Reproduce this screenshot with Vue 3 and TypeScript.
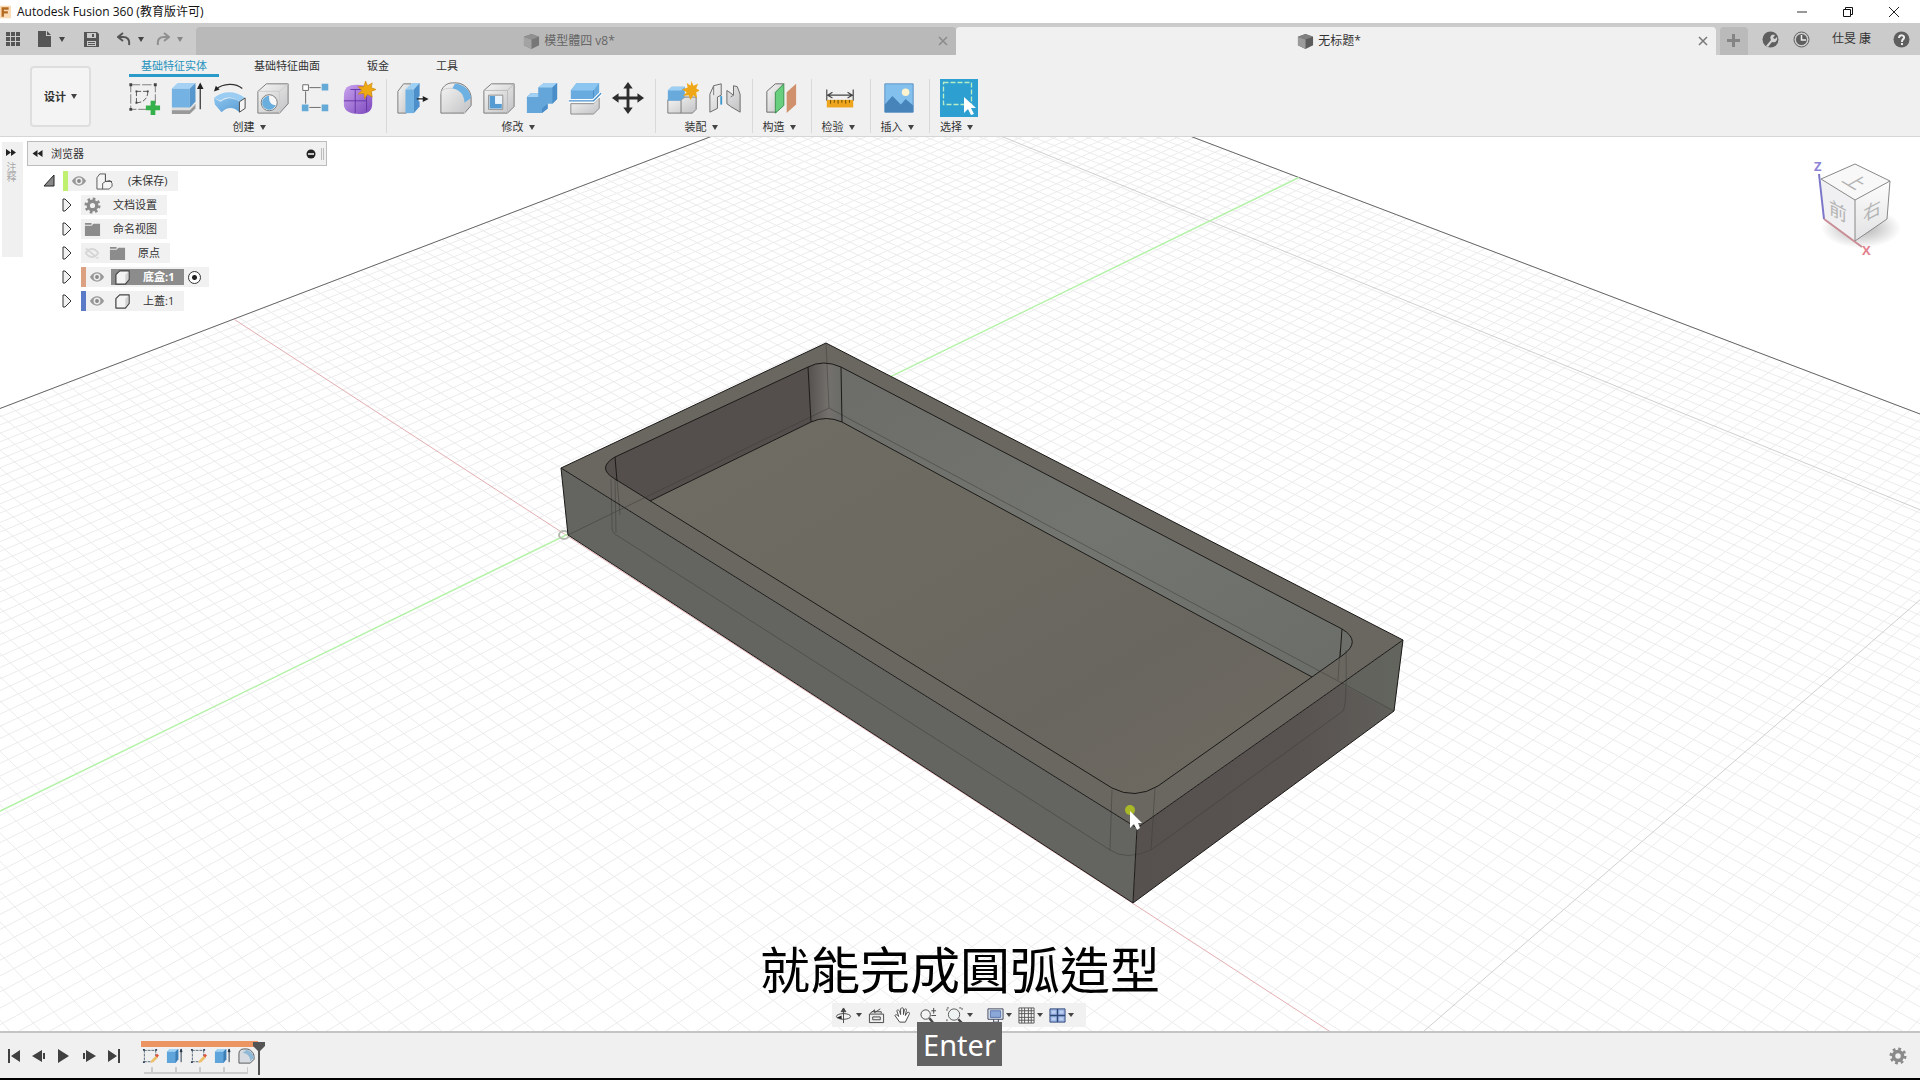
<script setup lang="ts">
interface Point { x: number; y: number }
interface Group { label: string; icons: string[] }
interface Node {
  label: string
  icon: string
  eye?: 'eye' | 'eye-off'
  bar?: string
  depth: number
  active?: boolean
}

const ribbonTabs: string[] = ['基础特征实体', '基础特征曲面', '钣金', '工具']
const groups: Group[] = [
  { label: '创建', icons: ['sketch', 'extrude', 'revolve', 'hole', 'pattern', 'form'] },
  { label: '修改', icons: ['presspull', 'fillet', 'shell', 'combine', 'split', 'move'] },
  { label: '装配', icons: ['component', 'joint'] },
  { label: '构造', icons: ['plane'] },
  { label: '检验', icons: ['measure'] },
  { label: '插入', icons: ['insert'] },
  { label: '选择', icons: ['select'] },
]
const nodes: Node[] = [
  { label: '(未保存)', icon: 'assembly', eye: 'eye', bar: '#c0f070', depth: 0 },
  { label: '文档设置', icon: 'gear', depth: 1 },
  { label: '命名视图', icon: 'folder', depth: 1 },
  { label: '原点', icon: 'folder', eye: 'eye-off', depth: 1 },
  { label: '底盒:1', icon: 'body', eye: 'eye', bar: '#dba180', depth: 1, active: true },
  { label: '上蓋:1', icon: 'body', eye: 'eye', bar: '#5b7bc8', depth: 1 },
]
const navTools = [
  { icon: 'orbit', caret: true, name: '动态观察' },
  { icon: 'lookat', caret: false, name: '观察方向' },
  { icon: 'pan', caret: false, name: '平移' },
  { icon: 'zoom', caret: false, name: '缩放' },
  { icon: 'fit', caret: true, name: '适合' },
  { icon: 'display', caret: true, name: '显示设置' },
  { icon: 'grid', caret: true, name: '栅格' },
  { icon: 'viewports', caret: true, name: '视口' },
]
const playback = ['first', 'previous', 'play', 'next', 'last']
const features = ['tl-sketch', 'tl-extrude', 'tl-sketch', 'tl-extrude', 'tl-fillet']

// Ground plane in perspective: an origin and the vanishing points of its two axes.
const origin: Point = { x: 566, y: 535 }
const vanishU: Point = { x: 3821, y: -1053 }
const vanishV: Point = { x: -1799, y: -1002 }
const scaleU = 1 / 4020
const scaleV = 1 / 3928
function project(u: number, v: number): Point {
  const a = u * scaleU
  const b = v * scaleV
  const w = 1 + a + b
  return {
    x: (origin.x + a * vanishU.x + b * vanishV.x) / w,
    y: (origin.y + a * vanishU.y + b * vanishV.y) / w,
  }
}
function segment(u1: number, v1: number, u2: number, v2: number): string {
  const p = project(u1, v1)
  const q = project(u2, v2)
  return `M${p.x.toFixed(1)} ${p.y.toFixed(1)}L${q.x.toFixed(1)} ${q.y.toFixed(1)}`
}
const step = 16.6
const maxU = 1168
const maxV = 642
const minU = -1700
const minV = -1700
let minor = ''
for (let u = maxU; u > minU; u -= step) minor += segment(u, maxV, u, minV)
for (let v = maxV; v > minV; v -= step) minor += segment(maxU, v, minU, v)
const major = segment(991, maxV, 991, minV) + segment(maxU, -1009, minU, -1009)
const border = segment(maxU, maxV, maxU, minV) + segment(maxU, maxV, minU, maxV)
const redAxis = segment(0, maxV, 0, minV)
const greenAxis = segment(minU, 0, maxU, 0)
</script>

<template>
  <svg class="defs" aria-hidden="true">
    <defs>
      <linearGradient id="blue" x2="1" y2="1"><stop stop-color="#8cc4ee" /><stop offset="1" stop-color="#5d9fd6" /></linearGradient>
      <linearGradient id="grey" x2="1" y2="1"><stop stop-color="#f6f6f6" /><stop offset="1" stop-color="#c2c2c4" /></linearGradient>
      <linearGradient id="purple" x2="1" y2="1"><stop stop-color="#c9a3ee" /><stop offset="1" stop-color="#7c47bd" /></linearGradient>
      <symbol id="sketch" viewBox="0 0 36 36"><path d="M4 4h26v26H4z" fill="none" stroke="#777" stroke-dasharray="10 2" /><path d="M10 11h12M10 11v12M22 11c0 8-5 12-12 12" fill="none" stroke="#555" stroke-dasharray="5 2" /><path d="M2.500 2.500h3v3h-3zM28.500 2.500h3v3h-3zM2.500 28.500h3v3h-3zM9 10h2v2H9zM21 10h2v2h-2zM9 22h2v2H9z" fill="#444" /><path d="M25 21h5v5h5v5h-5v5h-5v-5h-5v-5h5z" fill="#35b04b" /></symbol>
      <symbol id="extrude" viewBox="0 0 36 36"><path d="M2 30h19l6-6v5l-6 6H2z" fill="#999" /><path d="M2 29l4-4h21l-6 6H2z" fill="#ddd" /><path d="M2 8l6-6h19l-6 6z" fill="#a5d2f4" /><path d="M2 8h19v20H2z" fill="#73b2e3" /><path d="M21 8l6-6v20l-6 6z" fill="#5797ce" /><path d="M32 30V6M29.500 8L32 3l2.500 5z" fill="#222" stroke="#222" stroke-width="1.200" /></symbol>
      <symbol id="revolve" viewBox="0 0 36 36"><path d="M3 9C11 2 24 2 31 8" fill="none" stroke="#333" stroke-width="1.300" /><path d="M1 11l2-6 4 4z" fill="#222" /><path d="M1 18c9-8 23-8 33 0l-6 4c-8-6-14-6-20-1z" fill="#9bcdf2" /><path d="M1 18l7 4c6-5 13-5 20 0v11c-6-6-13-6-19 0l-7-8z" fill="url(#blue)" /><path d="M28 22l6-4v11l-6 4z" fill="#f4f4f4" stroke="#444" /></symbol>
      <symbol id="hole" viewBox="0 0 36 36"><path d="M2 11l9-8h23v21l-9 10H2z" fill="url(#grey)" stroke="#777" /><path d="M2 11h23v23M25 11l9-8" fill="none" stroke="#ccc" /><circle cx="14" cy="23" r="8.500" fill="#f7f7f7" stroke="#777" /><path d="M14 15.500a7.500 7.500 0 1 0 7 10c-5 0-8-4-7-10z" fill="#6aaede" /></symbol>
      <symbol id="pattern" viewBox="0 0 36 36"><path d="M11 7h12M7 11v13M11 28h12" stroke="#666" /><path d="M4 4h6v6H4z" fill="#fff" stroke="#666" /><path d="M24 3h7v7h-7zM3 25h7v7H3zM24 25h7v7h-7z" fill="#65a9d6" /></symbol>
      <symbol id="form" viewBox="0 0 36 36"><path d="M2 17C2 7 6 4 16 4s16 4 16 13v7c0 8-5 11-14 11S2 32 2 25z" fill="url(#purple)" /><path d="M14 9v25M2 21h24M9 9h17M26 11v21" stroke="#6535a5" fill="none" /><path d="M25 0l2 5 5-3-1 5 5 2-5 2 1 6-5-3-3 5-1-6-6 1 4-4-4-4 6 0z" fill="#edaa14" stroke="#c88205" stroke-width="0.600" /></symbol>
      <symbol id="presspull" viewBox="0 0 36 36"><path d="M2 11l6-8h8v24l-5 7H2z" fill="url(#grey)" stroke="#777" /><path d="M10 9l7-7h8l-5 7z" fill="#9ed0f4" /><path d="M10 9h9v25h-9z" fill="#72b2e2" /><path d="M19 9l6-7v25l-6 7z" fill="#4d8fca" /><path d="M24 19h6" stroke="#fff" stroke-width="5" /><path d="M22 19h7M29 17l4 2-4 2z" fill="#222" stroke="#222" stroke-width="1.400" /></symbol>
      <symbol id="fillet" viewBox="0 0 36 36"><path d="M2 34V14C2 7 8 2 14 2h4c9 0 16 8 16 16v8l-7 8z" fill="url(#grey)" stroke="#777" /><path d="M17 3c9 0 16 7 17 15l-7 5c0-8-5-14-13-15z" fill="#6db0e2" /><path d="M27 23v11M2 14c0-5 5-7 12-6" fill="none" stroke="#ccc" /></symbol>
      <symbol id="shell" viewBox="0 0 36 36"><path d="M2 10l8-7h24v24l-7 7H2z" fill="url(#grey)" stroke="#777" /><path d="M2 10h25v24M27 10l7-7" fill="none" stroke="#bbb" /><path d="M7 15h15v15H7z" fill="#fff" stroke="#888" /><path d="M8 16l6 0v8h7v5H8z" fill="#559bd3" /><path d="M14 16h7v8h-7z" fill="#e9f3fb" /></symbol>
      <symbol id="combine" viewBox="0 0 36 36"><path d="M2 17l4-4h8V7l6-5h14v17l-5 5h-5v5l-6 5H2z" fill="#65a6da" /><path d="M2 17l4-4h8v4zM14 7l6-5h14l-5 5z" fill="#a2d1f4" /><path d="M29 7l5-5v17l-5 5zM18 29l6-5v5l-6 5z" fill="#4a8dc8" /></symbol>
      <symbol id="split" viewBox="0 0 36 36"><path d="M3 10l6-8h24v11l-6 6H3z" fill="#69abdf" /><path d="M3 10l6-8h24l-6 8z" fill="#8cc5ef" /><path d="M27 10v9" stroke="#4a8dc8" /><path d="M3 24h24l6-6v11l-6 6H3z" fill="url(#grey)" stroke="#888" /><path d="M1 21h26l8-8" fill="none" stroke="#fff" stroke-width="4" /><path d="M1 21h26l8-8" fill="none" stroke="#4790cc" stroke-width="1.500" /></symbol>
      <symbol id="move" viewBox="0 0 36 36"><path d="M18 1l5 7h-3.500v8.500H28V13l7 5-7 5v-3.500h-8.500V28H23l-5 7-5-7h3.500v-8.500H8V23l-7-5 7-5v3.500h8.500V8H13z" fill="#2d2d2d" /></symbol>
      <symbol id="component" viewBox="0 0 36 36"><path d="M3 20h14l4-3h12v13l-4 4H3zM17 20v14" fill="url(#grey)" stroke="#777" /><path d="M3 10l4-4h14v11l-5 4H3z" fill="#69aadc" /><path d="M3 10l4-4h14l-4 4z" fill="#9dcff3" /><path d="M28 0l2 5 5-2-2 5 4 2-4 2 1 6-4-3-3 5-2-5-6 1 4-4-5-3 6-2-1-5 4 3z" fill="#efa718" /></symbol>
      <symbol id="joint" viewBox="0 0 36 36"><path d="M2 14L6 5l8-2v12l-4 2v12l-8 4zM34 14L31 6l-4-1v10l-7-5v14l4 3 10 6z" fill="url(#grey)" stroke="#666" /><path d="M6 5v10M27 15l-3 2" fill="none" stroke="#777" /><path d="M14 16v9" stroke="#3f99cf" stroke-width="2" /></symbol>
      <symbol id="plane" viewBox="0 0 36 36"><path d="M3 11l9-8h9l-8 9v21H3z" fill="url(#grey)" stroke="#666" /><path d="M12 12l9-9v23l-9 8z" fill="#67cf7e" stroke="#3d8f50" /><path d="M24 12l10-9v22l-10 9z" fill="#d0906c" /></symbol>
      <symbol id="measure" viewBox="0 0 36 36"><path d="M4 9v12M32 9v12M5 15h26M10 12l-5 3 5 3M26 12l5 3-5 3" fill="none" stroke="#444" stroke-width="1.200" /><path d="M4 20h28v8H4z" fill="#eca51c" /><path d="M8 20v4M12 20v3M16 20v4M20 20v3M24 20v4M28 20v3" stroke="#6c4b05" /></symbol>
      <symbol id="insert" viewBox="0 0 36 36"><path d="M3 3h30v30H3z" fill="#83c0ee" stroke="#5791c4" /><circle cx="25" cy="12" r="4" fill="#fff4cf" /><path d="M3 25l8-9 9 9 5-6 8 7v7H3z" fill="#4684ba" /></symbol>
      <symbol id="select" viewBox="0 0 38 38"><path d="M0 0h38v38H0z" fill="#2d9fd0" /><path d="M3.500 3.500h28v22h-28z" fill="none" stroke="#b9edc5" stroke-width="1.300" stroke-dasharray="5 2" /><path d="M24 18v16l4-4 3 6 3-1-3-6h5z" fill="#fff" /></symbol>
      <symbol id="gear" viewBox="0 0 18 18"><circle cx="9" cy="9" r="4.500" fill="none" stroke="#8b8b8b" stroke-width="3.500" /><circle cx="9" cy="9" r="7" fill="none" stroke="#8b8b8b" stroke-width="3" stroke-dasharray="2.750 2.750" /></symbol>
      <symbol id="folder" viewBox="0 0 18 18"><path d="M1 2h7v2H1zM1 5h7l2-2h7v13H1z" fill="#8c8c8c" /></symbol>
      <symbol id="body" viewBox="0 0 18 18"><path d="M2 6l4-4h10v9l-4 5H2z" fill="#f4f4f4" stroke="#444" stroke-width="1.300" stroke-linejoin="round" /><path d="M12 6v9l3-4V3z" fill="#d2d2d2" /></symbol>
      <symbol id="assembly" viewBox="0 0 18 18"><path d="M1 5l3-4h6v8l5-1 2 3v3l-3 3H1zM7 17v-6l3-2h7M10 1v8" fill="#f5f5f5" stroke="#555" /></symbol>
      <symbol id="eye" viewBox="0 0 18 14"><path d="M1 7c4-7 12-7 16 0-4 7-12 7-16 0z" fill="#999" /><circle cx="9" cy="7" r="3.800" fill="#eee" /><circle cx="9" cy="7" r="2.200" fill="#888" /></symbol>
      <symbol id="eye-off" viewBox="0 0 18 14"><path d="M2 7c4-6 10-6 14 0-4 6-10 6-14 0zM2 2l14 11" fill="none" stroke="#d6d6d6" stroke-width="2" /></symbol>
      <symbol id="cube" viewBox="0 0 18 18"><path d="M1 4l8-3 8 3v9l-8 4-8-4z" fill="#5c5c5c" /><path d="M1 4l8 3v10l-8-4z" fill="#9b9b9b" /><path d="M1 4l8-3 8 3-8 3z" fill="#808080" /></symbol>
      <symbol id="orbit" viewBox="0 0 18 18"><ellipse cx="9" cy="10" rx="7.500" ry="3" fill="none" stroke="#444" /><path d="M9 17V3M6.500 5L9 1l2.500 4z" fill="#444" stroke="#444" /><path d="M2 11l5-2v4z" fill="#222" /></symbol>
      <symbol id="lookat" viewBox="0 0 18 18"><path d="M1.500 7.500h15v9h-15zM5 10.500h8v3H5zM2 7l5-4v3l6-4M4 5h10v2" fill="#eee" stroke="#444" /></symbol>
      <symbol id="pan" viewBox="0 0 18 18"><path d="M6 16L1 9c1-2 3 0 4 1L3 4c1-2 2-1 3 1l1 3V2c1-2 3-1 3 0v6l1-5c1-2 3-1 2 1l-1 5 2-3c2-1 3 0 2 2l-4 8z" fill="#fff" stroke="#444" /></symbol>
      <symbol id="zoom" viewBox="0 0 18 18"><circle cx="6" cy="8" r="5" fill="#f4f4f4" stroke="#444" /><path d="M10 12l4 5" stroke="#444" stroke-width="2.500" /><path d="M12 4h5M14.500 1v6M12 9h5" stroke="#444" /></symbol>
      <symbol id="fit" viewBox="0 0 18 18"><path d="M1 4V1h3M14 1h3v3M1 13v4h4" fill="none" stroke="#444" stroke-dasharray="2 1" /><circle cx="8.500" cy="8" r="6" fill="#eef2f2" stroke="#555" /><path d="M13 13l4 4" stroke="#444" stroke-width="2.500" /></symbol>
      <symbol id="display" viewBox="0 0 18 18"><path d="M1 2h16v11H1z" fill="#e6ebf3" stroke="#39435a" /><path d="M3.500 4h11v7h-11z" fill="#8ba8d8" stroke="#5471a9" /><path d="M7 13v3h5v-3M5 16.500h9" fill="none" stroke="#39435a" /></symbol>
      <symbol id="grid" viewBox="0 0 18 18"><path d="M1 1h16v16H1zM4 1v16M7 1v16M11 1v16M14 1v16M1 4h16M1 7h16M1 11h16M1 14h16" fill="#f8f8f8" stroke="#555" /></symbol>
      <symbol id="viewports" viewBox="0 0 18 18"><path d="M1 2h16v14H1z" fill="#9db7e5" stroke="#2f4778" /><path d="M9 2v14M1 9h16" stroke="#2f4778" stroke-width="1.500" /><path d="M3 4h4v3H3zM11 4h4v3h-4zM3 11h4v3H3zM11 11h4v3h-4z" fill="#bdd0f2" /></symbol>
      <symbol id="first" viewBox="0 0 18 18"><path d="M3 2h2v14H3zM15 3v12L6 9z" fill="#404040" /></symbol>
      <symbol id="previous" viewBox="0 0 18 18"><path d="M12 3v12L2 9zM13 6h2v6h-2z" fill="#404040" /></symbol>
      <symbol id="play" viewBox="0 0 18 18"><path d="M3 2l11 7-11 7z" fill="#404040" /></symbol>
      <symbol id="next" viewBox="0 0 18 18"><path d="M6 3v12l10-6zM3 6h2v6H3z" fill="#404040" /></symbol>
      <symbol id="last" viewBox="0 0 18 18"><path d="M13 2h2v14h-2zM3 3v12l9-6z" fill="#404040" /></symbol>
      <symbol id="tl-sketch" viewBox="0 0 18 18"><path d="M2 2.500h12M2.500 2v12M2 14.500h7M14.500 2v7" stroke="#567" stroke-dasharray="3 1" /><path d="M1 1h2v2H1zM14 1h2v2h-2zM1 14h2v2H1z" fill="#345" /><path d="M9 16l1-3 5-5 2 2-5 5z" fill="#ecc06b" /><path d="M14 8l2-2 2 2-2 2z" fill="#e4533d" /></symbol>
      <symbol id="tl-extrude" viewBox="0 0 18 18"><path d="M1 4l3-3h9v11l-3 4H1z" fill="#5fa5dc" /><path d="M1 4l3-3h9l-3 3z" fill="#a4d3f4" /><path d="M10 4l3-3v11l-3 4z" fill="#3d7eb5" /><path d="M16 15V3M15 4l1-3 1 3z" stroke="#234" fill="#234" /></symbol>
      <symbol id="tl-fillet" viewBox="0 0 18 18"><path d="M1 16V6c0-3 2-5 5-5h3c4 0 8 4 8 8v3l-4 4z" fill="#d5dbe0" stroke="#555" /><path d="M9 2c4 0 7 4 8 8l-4 4c0-5-3-8-8-9z" fill="#90b9d8" /></symbol>
    </defs>
  </svg>

  <div class="app">
    <header class="titlebar">
      <svg class="logo" viewBox="0 0 14 16"><path d="M0 0h14v16H0z" fill="#fbdcb8" /><path d="M2 2h9v3H5v2h5v3H5v4H2z" fill="#b56a20" /></svg>
      <span class="app-title">Autodesk Fusion 360 (教育版许可)</span>
      <button class="win" aria-label="最小化"><svg viewBox="0 0 12 12"><path d="M1 6h10" stroke="#333" /></svg></button>
      <button class="win" aria-label="还原"><svg viewBox="0 0 12 12"><path d="M1.500 3.500h7v7h-7zM3.500 3V1.500h7v7H9" fill="none" stroke="#111" /></svg></button>
      <button class="win" aria-label="关闭"><svg viewBox="0 0 12 12"><path d="M1 1l10 10M11 1L1 11" stroke="#222" /></svg></button>
    </header>

    <div class="tabbar">
      <div class="quick">
        <button aria-label="数据面板"><svg width="14" height="14" viewBox="0 0 14 14"><path d="M0 0h4v4H0zM5 0h4v4H5zM10 0h4v4h-4zM0 5h4v4H0zM5 5h4v4H5zM10 5h4v4h-4zM0 10h4v4H0zM5 10h4v4H5zM10 10h4v4h-4z" fill="#555" /></svg></button>
        <button class="file" aria-label="文件"><svg width="14" height="16" viewBox="0 0 14 16"><path d="M0 0h8v5h5v11H0zM9 0l4 4H9z" fill="#555" /></svg><i class="caret"></i></button>
        <button class="save" aria-label="保存"><svg width="15" height="15" viewBox="0 0 15 15"><path d="M0 0h13l2 2v13H0zM3 1v5h9V1zM3 9v5h9V9zM8 2h2v3H8zM4 10h7v1H4zM4 12h7v1H4z" fill="#555" fill-rule="evenodd" /></svg></button>
        <button class="undo" aria-label="撤消"><svg width="14" height="14" viewBox="0 0 14 14"><path d="M6 1L1 5l5 4M1 5h5c4 0 7 2 6 8" fill="none" stroke="#555" stroke-width="2" /></svg><i class="caret"></i></button>
        <button class="undo faded" aria-label="恢复"><svg width="14" height="14" viewBox="0 0 14 14"><path d="M8 1l5 4-5 4M13 5H8c-4 0-7 2-6 8" fill="none" stroke="#555" stroke-width="2" /></svg><i class="caret"></i></button>
      </div>
      <div class="doc">
        <button class="doc-title"><svg width="17" height="17"><use href="#cube" /></svg>模型體四 v8*</button>
        <button class="close" aria-label="关闭 模型體四"><svg width="10" height="10" viewBox="0 0 10 10"><path d="M1 1l8 8M9 1L1 9" stroke="#777" stroke-width="1.500" /></svg></button>
      </div>
      <div class="doc current">
        <button class="doc-title"><svg width="17" height="17"><use href="#cube" /></svg>无标题*</button>
        <button class="close" aria-label="关闭 无标题"><svg width="10" height="10" viewBox="0 0 10 10"><path d="M1 1l8 8M9 1L1 9" stroke="#777" stroke-width="1.500" /></svg></button>
      </div>
      <div class="account">
        <button class="plus" aria-label="新建设计"><svg width="14" height="14" viewBox="0 0 14 14"><path d="M5 0h3v5h5v3H8v5H5V8H0V5h5z" fill="#848484" /></svg></button>
        <button aria-label="扩展"><svg width="17" height="17" viewBox="0 0 17 17"><circle cx="8.500" cy="8.500" r="8" fill="#5f5f5f" /><path d="M4 15l5-6c-2-4 1-6 4-5l-2 3 2 1 2-2c1 4-2 6-5 5l-4 5z" fill="#d4d4d4" /></svg></button>
        <button aria-label="作业状态"><svg width="17" height="17" viewBox="0 0 17 17"><circle cx="8.500" cy="8.500" r="7.500" fill="#ccc" stroke="#5f5f5f" /><circle cx="8.500" cy="8.500" r="5.500" fill="#5f5f5f" /><path d="M8.500 4v5H13" fill="none" stroke="#eee" stroke-width="1.500" /></svg></button>
        <button class="user">仕旻 康</button>
        <button aria-label="帮助"><svg width="17" height="17" viewBox="0 0 17 17"><circle cx="8.500" cy="8.500" r="8" fill="#5f5f5f" /><path d="M6 7c0-4 6-3 5 0-1 2-2 1-2 4M9 12v2" fill="none" stroke="#eee" stroke-width="2" /></svg></button>
      </div>
    </div>

    <div class="ribbon">
      <button class="workspace">设计<i class="caret"></i></button>
      <div class="ribbon-main">
        <nav class="ribbon-tabs">
          <button v-for="(tab, i) in ribbonTabs" :key="tab" :class="{ on: i === 0 }">{{ tab }}</button>
        </nav>
        <div class="groups">
          <section v-for="group in groups" :key="group.label" class="group">
            <div class="tools">
              <button v-for="icon in group.icons" :key="icon" class="tool" :class="icon" :aria-label="icon">
                <svg><use :href="'#' + icon" /></svg>
              </button>
            </div>
            <button class="group-label">{{ group.label }}<i class="caret"></i></button>
          </section>
        </div>
      </div>
    </div>

    <main class="canvas">
      <svg class="scene" viewBox="0 137 1920 894" preserveAspectRatio="xMidYMid slice">
        <defs>
          <linearGradient id="floor" x1="0" y1="0" x2="1" y2="1"><stop stop-color="#706c65" /><stop offset="0.350" stop-color="#6d6b61" /><stop offset="0.700" stop-color="#69665f" /><stop offset="1" stop-color="#6f6b62" /></linearGradient>
          <linearGradient id="wall" x1="0" y1="0" x2="1" y2="1"><stop stop-color="#6c6d69" /><stop offset="0.500" stop-color="#737570" /><stop offset="1" stop-color="#6b6d69" /></linearGradient>
          <linearGradient id="corner" x1="0" x2="1"><stop stop-color="#55514e" /><stop offset="0.600" stop-color="#74716d" /><stop offset="1" stop-color="#696a66" /></linearGradient>
          <linearGradient id="side" x1="0" x2="1"><stop stop-color="#56514f" /><stop offset="0.600" stop-color="#585250" /><stop offset="1" stop-color="#61605b" /></linearGradient>
          <linearGradient id="shade" x1="0" y1="0" x2="0" y2="1"><stop stop-color="#fdfdfd" /><stop offset="1" stop-color="#e2e2e4" /></linearGradient>
          <radialGradient id="shadow"><stop stop-color="#777" stop-opacity="0.600" /><stop offset="1" stop-color="#777" stop-opacity="0" /></radialGradient>
        </defs>
        <path :d="minor" class="minor" />
        <path :d="major" class="major" />
        <path :d="border" class="border" />
        <path :d="redAxis" class="red" />
        <path :d="greenAxis" class="green" />
        <ellipse cx="564" cy="535" rx="5" ry="4" class="origin" />

        <path d="M561 468L1137 828L1133 903L568 535z" fill="#646561" />
        <path d="M1137 828L1403 640L1394 711L1133 903z" fill="url(#side)" />
        <path d="M826 343L1403 640L1137 828L561 468z" fill="#6a6761" />
        <path d="M615 457L808 367Q823 359 841 367L1342 629Q1362 641 1343 655L1158 786Q1135 800 1112 788L615 479Q596 468 615 457z" fill="url(#floor)" />
        <path d="M615 457L808 367L811 422L650 501L615 479Q596 468 615 457z" fill="#544f4d" />
        <path d="M808 367Q823 359 841 367L842 422Q826 415 811 422z" fill="url(#corner)" />
        <path d="M841 367L1342 629Q1362 641 1343 655L1312 677L842 422z" fill="url(#wall)" />
        <path d="M1344 686L1394 711L1403 640L1344 682z" fill="#646660" opacity="0.700" />
        <g class="hidden">
          <path d="M826 343L829 408L568 535M829 408L1394 711" />
          <path d="M611 479L612 524Q611 534 618 536L1110 850Q1126 861 1151 850L1343 711Q1347 706 1346 650M615 479L616 533M617 479L620 515M1112 790L1110 850M1155 788L1151 850M1340 650L1338 680" />
        </g>
        <g class="edge">
          <path d="M826 343L1403 640L1137 828L561 468zM561 468L568 535L1133 903L1394 711L1403 640M1137 828L1133 903" />
          <path d="M615 457L808 367Q823 359 841 367L1342 629Q1362 641 1343 655L1158 786Q1135 800 1112 788L615 479Q596 468 615 457z" />
          <path d="M650 501L811 422Q826 415 842 422L1312 677M808 367L811 422M841 367L842 422M615 457L617 481M1342 629L1340 657" />
        </g>
        <circle cx="1130" cy="810" r="5" fill="#a9b827" />
        <path d="M1130 811V828L1134 824L1137 830L1140 828L1138 823H1142z" fill="#fff" />

        <g>
          <ellipse cx="1861" cy="228" rx="40" ry="20" fill="url(#shadow)" />
          <path d="M1821 179L1855 200V241L1824 219z" fill="#f0f0f2" />
          <path d="M1855 200L1890 181L1887 219L1855 241z" fill="url(#shade)" />
          <path d="M1821 179L1855 164L1890 181L1855 200z" fill="#f8f8f9" />
          <path d="M1821 179L1855 164L1890 181L1855 200zM1855 200V241M1890 181L1887 219L1855 241" fill="none" stroke="#888" />
          <path d="M1819 174L1824 219" stroke="#7b76c8" stroke-width="2" />
          <path d="M1824 219L1862 247" stroke="#c98d96" stroke-width="2" />
          <text x="1814" y="171" class="axis-label" fill="#8d84d6">Z</text>
          <text x="1862" y="255" class="axis-label" fill="#e2828e">X</text>
          <text class="face" transform="translate(1829 213) skewY(28)">前</text>
          <text class="face" transform="translate(1863 222) skewY(-28)">右</text>
          <text class="face" transform="translate(1841 181) rotate(31) skewX(-29)">上</text>
        </g>
      </svg>

      <aside class="strip">
        <svg width="10" height="7" viewBox="0 0 10 7"><path d="M0 0l5 3.500L0 7zM5 0l5 3.500L5 7z" fill="#222" /></svg>
        <span>注释</span>
      </aside>

      <section class="browser">
        <header class="browser-head">
          <svg width="11" height="7" viewBox="0 0 10 7"><path d="M10 0L5 3.500 10 7zM5 0L0 3.500 5 7z" fill="#222" /></svg>
          <span>浏览器</span>
          <button aria-label="收起"><svg width="10" height="10" viewBox="0 0 10 10"><circle cx="5" cy="5" r="4.500" fill="#222" /><path d="M2 5h6" stroke="#fff" stroke-width="1.500" /></svg></button>
          <i class="grip"></i>
        </header>
        <ul class="tree">
          <li v-for="node in nodes" :key="node.label" :class="{ root: node.depth === 0 }">
            <svg v-if="node.depth === 0" class="arrow" viewBox="0 0 12 14"><path d="M1 12L11 1v11z" fill="#888" stroke="#222" /></svg>
            <svg v-else class="arrow" viewBox="0 0 12 14"><path d="M2 1v12h2l6-6-6-6z" fill="#f0f0f0" stroke="#333" /></svg>
            <div class="row">
              <i v-if="node.bar" class="bar" :style="{ background: node.bar }"></i>
              <svg v-if="node.eye" class="eye"><use :href="'#' + node.eye" /></svg>
              <span class="item" :class="{ active: node.active }">
                <svg class="kind"><use :href="'#' + node.icon" /></svg>
                <span class="name">{{ node.label }}</span>
              </span>
              <input v-if="node.active" type="radio" checked aria-label="激活零部件" />
            </div>
          </li>
        </ul>
      </section>

      <p class="subtitle">就能完成圓弧造型</p>
      <div class="navbar">
        <button v-for="tool in navTools" :key="tool.icon" :aria-label="tool.name" :class="tool.icon">
          <svg width="17" height="17"><use :href="'#' + tool.icon" /></svg><i v-if="tool.caret" class="caret"></i>
        </button>
      </div>
    </main>

    <footer class="timeline">
      <div class="playback">
        <button v-for="p in playback" :key="p" :aria-label="p"><svg width="18" height="18"><use :href="'#' + p" /></svg></button>
      </div>
      <div class="track">
        <i class="span"></i>
        <div class="features">
          <button v-for="(f, i) in features" :key="i" :aria-label="f"><svg width="17" height="17"><use :href="'#' + f" /></svg></button>
        </div>
        <i class="ruler"></i>
        <svg class="marker" viewBox="0 0 12 33"><path d="M0 0h12v4L7 9v24H5V9L0 4z" fill="#555" /></svg>
      </div>
      <button class="settings" aria-label="设置"><svg width="18" height="18"><use href="#gear" /></svg></button>
      <kbd class="key">Enter</kbd>
    </footer>
  </div>
</template>

<style>
body { background: #000; }
</style>

<style scoped>
.defs { position: absolute; width: 0; height: 0; }
.app {
  display: flex;
  flex-direction: column;
  height: 100vh;
  box-sizing: border-box;
  border-bottom: 2px solid #000;
  overflow: hidden;
  background: #f0f0f0;
  color: #333;
  font: 11px/16px "Open Sans", "Noto Sans CJK SC", sans-serif;
}
button { border: 0; padding: 0; margin: 0; background: none; color: inherit; font: inherit; display: flex; align-items: center; justify-content: center; flex: none; }
svg { display: block; flex: none; }
.caret { border: 3px solid transparent; border-top: 5px solid #444; border-bottom: 0; margin-left: 5px; }

.titlebar { display: flex; align-items: center; height: 23px; padding-right: 3px; background: #fff; color: #111; font-size: 12px; }
.logo { width: 11px; height: 14px; }
.app-title { flex: 1; margin-left: 6px; }
.win { width: 46px; height: 23px; }
.win svg { width: 12px; height: 12px; }

.tabbar { display: flex; height: 32px; background: #cbcbcb; }
.quick { display: flex; align-items: center; width: 196px; box-sizing: border-box; padding-left: 6px; flex: none; }
.file { margin-left: 18px; }
.save { margin-left: 19px; }
.undo { margin-left: 18px; }
.faded { opacity: 0.5; margin-left: 12px; }
.quick .caret { margin-left: 7px; }
.doc { flex: 1; display: flex; margin-top: 4px; background: #b9b9b9; border-radius: 4px 4px 0 0; color: #666; font-size: 12px; }
.doc.current { background: #f0f0f0; color: #333; }
.doc:not(.current) svg { opacity: 0.7; }
.doc-title { flex: 1; gap: 4px; padding-left: 12px; }
.close { width: 26px; }
.account { display: flex; align-items: center; justify-content: space-between; width: 204px; box-sizing: border-box; padding: 0 10px 0 4px; flex: none; }
.plus { width: 28px; height: 28px; margin-top: 4px; background: #bababa; border-radius: 4px 4px 0 0; }
.user { font-size: 12px; margin: 0 8px; }

.ribbon { display: flex; height: 81px; border-bottom: 1px solid #d6d6d6; flex: none; }
.workspace { width: 61px; height: 61px; margin: 11px 24px 0 30px; box-sizing: border-box; border: 2px solid #dedede; border-radius: 4px; background: #f4f4f4; font-weight: 700; }
.ribbon-main { display: flex; flex-direction: column; }
.ribbon-tabs { display: flex; gap: 23px; padding-left: 14px; height: 22px; }
.ribbon-tabs button { padding: 2px 12px 0; border-bottom: 3px solid transparent; box-sizing: border-box; height: 22px; }
.ribbon-tabs .on { color: #2893bd; border-color: #2a9bc8; }
.groups { display: flex; margin-top: 2px; padding-left: 3px; }
.group { display: flex; flex-direction: column; align-items: center; box-sizing: border-box; min-width: 59px; height: 54px; padding: 0 6px 0 4px; border-right: 1px solid #d9d9d9; }
.group:last-child { border: 0; }
.tools { display: flex; height: 38px; align-items: center; }
.tool { width: 43px; height: 38px; }
.tool svg { width: 34px; height: 34px; }
.tool.select svg { width: 38px; height: 38px; }
.group-label { height: 20px; padding-right: 4px; }

.canvas { position: relative; flex: 1; min-height: 0; background: #fff; overflow: hidden; display: flex; align-items: flex-start; }
.scene { position: absolute; inset: 0; width: 100%; height: 100%; }
.minor { fill: none; stroke: #ececee; stroke-width: 1; }
.major { fill: none; stroke: #d0d0d0; }
.border { fill: none; stroke: #666; }
.red { fill: none; stroke: #e3aeb2; }
.green { fill: none; stroke: #b4f2a8; stroke-width: 1.500; }
.origin { fill: none; stroke: #b5bab0; stroke-width: 2; }
.hidden path { fill: none; stroke: #3c3b37; opacity: 0.500; }
.edge path { fill: none; stroke: #1c1a18; stroke-linejoin: round; }
.axis-label { font: 700 13px "Open Sans", sans-serif; }
.face { font: 18px "Noto Sans CJK SC", sans-serif; fill: #b4b4b4; }

.strip { position: relative; display: flex; flex-direction: column; align-items: center; gap: 6px; width: 21px; height: 115px; margin: 5px 4px 0 2px; padding: 7px 3px 0 0; box-sizing: border-box; background: #f0f0f0; flex: none; }
.strip span { writing-mode: vertical-rl; font-size: 10px; color: #aaa; }
.browser { position: relative; width: 300px; margin-top: 4px; flex: none; }
.browser-head { display: flex; align-items: center; gap: 8px; height: 25px; box-sizing: border-box; padding: 0 2px 0 4px; border: 1px solid #bcbcbc; background: #f0f0f0; }
.browser-head span { flex: 1; }
.grip { width: 1px; height: 12px; border: 1px solid #bbb; border-width: 0 1px; margin-left: -3px; }
.tree { list-style: none; margin: 3px 0 0; padding: 0; }
.tree li { display: flex; align-items: center; height: 24px; padding-left: 34px; gap: 8px; }
.tree li.root { padding-left: 16px; }
.arrow { width: 12px; height: 14px; }
.row { display: flex; align-items: center; height: 20px; background: #f1f1f1; }
.bar { width: 5px; height: 20px; }
.eye { width: 16px; height: 14px; margin: 0 6px 0 3px; }
.item { display: flex; align-items: center; height: 16px; gap: 12px; padding: 0 10px 0 3px; }
.kind { width: 17px; height: 17px; }
.root .item { gap: 15px; }
.item.active { background: #8c8c8c; color: #fff; font-weight: 700; }
.row input { appearance: none; width: 13px; height: 13px; margin: 0 8px 0 4px; border: 1px solid #333; border-radius: 50%; background: radial-gradient(circle, #222 2px, #fff 3px); }

.subtitle { position: absolute; left: 0; right: 0; bottom: 28px; margin: 0; text-align: center; color: #000; font: 400 50px/72px "Noto Sans CJK TC", sans-serif; }
.navbar { position: absolute; left: 832px; bottom: 4px; display: flex; align-items: center; gap: 9px; height: 24px; padding: 0 15px 0 3px; background: #f1f1f1; }
.navbar .caret { margin: 0 -3px 0 4px; border-width: 4px 3px 0; }
.navbar .display { margin-left: 8px; }
.navbar .display .caret, .navbar .grid .caret, .navbar .viewports .caret { margin-left: 2px; }

.timeline { position: relative; display: flex; align-items: center; height: 47px; box-sizing: border-box; border-top: 2px solid #c4c4c4; background: #f0f0f0; flex: none; }
.playback { display: flex; gap: 7px; padding-left: 5px; }
.track { position: relative; width: 117px; height: 33px; margin: 3px 0 0 18px; }
.span { display: block; height: 6px; background: #ec9562; }
.features { display: flex; gap: 7px; padding: 1px 0 0 1px; }
.ruler { display: block; height: 5px; margin: 2px 10px 0 3px; border-bottom: 2px solid #ccc; background: repeating-linear-gradient(90deg, transparent 0 7px, #ccc 7px 9px, transparent 9px 24px); }
.marker { position: absolute; right: -7px; top: 1px; width: 12px; height: 33px; }
.settings { margin-left: auto; margin-right: 13px; }
.key { position: absolute; left: 50%; margin-left: -43px; bottom: 12px; width: 85px; height: 44px; background: #626262; color: #fff; text-align: center; font: 29px/46px "Noto Sans", sans-serif; }
</style>
